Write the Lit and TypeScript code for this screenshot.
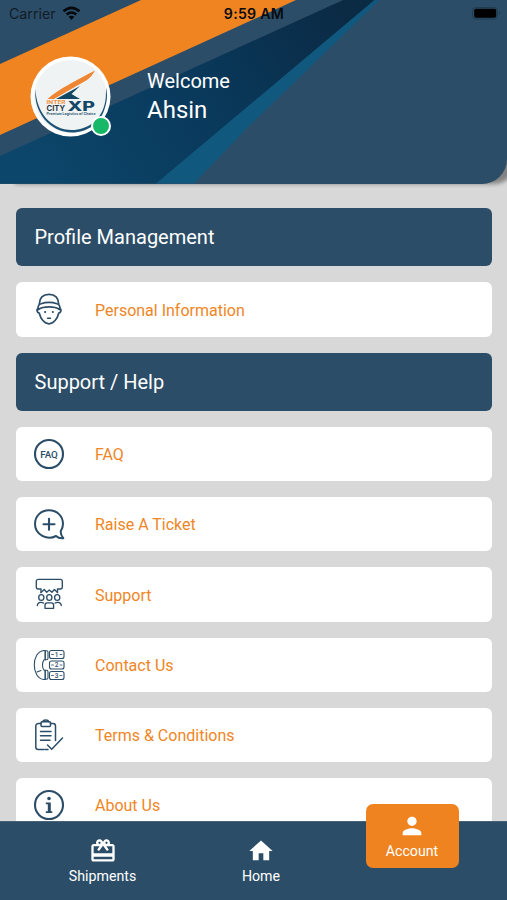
import { LitElement, html, css, svg, TemplateResult } from "lit";
import { customElement, property } from "lit/decorators.js";

const icons: Record<string, TemplateResult> = {
  person: svg`<g stroke-width="1.700">
    <path d="M6.300 11C6.500 5 10 1.300 16 1.300S25.500 5 25.700 11"/>
    <path d="M5.500 16.500c-1.200-3 .2-5 2.500-5.700 5-1.700 11-1.700 16 0 2.300.7 3.700 2.700 2.500 5.700-5-3.400-16-3.400-21 0z"/>
    <path d="M5.500 15.500c-2.300.5-1.800 4.300.8 4.700 1.200 5.500 5.200 10.600 9.700 10.600s8.500-5.100 9.700-10.600c2.600-.4 3.100-4.200.8-4.700"/>
    <path d="M14.500 25.200h3" stroke-width="1.500"/><path d="M12 19h.3M19.700 19h.3" stroke-width="1.800"/></g>`,
  faq: svg`<circle cx="16" cy="16" r="14" stroke-width="2.100"/><text class="faq" x="16" y="19.500">FAQ</text>`,
  ticket: svg`<path d="M23 28C14.500 32.600 2 27 2 16 2 8 8 2.200 16 2.200S30 8 30 16c0 3-1 5.200-2.300 7.200-.1 2.600.8 5 2.600 7-3 .3-5.400-.4-7.300-2.200z" stroke-width="2"/><path d="M16 10.800v11M10.500 16.300h11" stroke-width="2.100"/>`,
  support: svg`<g stroke-width="1.350"><path d="M8 14.500V11H5.300a2 2 0 0 1-2-2V3.300a2 2 0 0 1 2-2h22a2 2 0 0 1 2 2V9a2 2 0 0 1-2 2H24.500v3.500"/>
    <path d="M8 14.500l3.200-3 2.500 2.800 2.600-2.300 2.600 2.300 2.500-2.800 3.100 3"/>
    <ellipse cx="8.300" cy="19.500" rx="2.600" ry="2.900"/><ellipse cx="16.300" cy="19.500" rx="2.600" ry="2.900"/><ellipse cx="24.200" cy="19.500" rx="2.600" ry="2.900"/>
    <path d="M4.300 27.500c.2-2.200 1.500-3.200 3.500-3.200 1.200 0 2 .2 2.700.7M28.300 27.500c-.2-2.200-1.500-3.200-3.500-3.200-1.200 0-2 .2-2.700.7M12 30.300v-3q0-2.500 2.300-2.500h4q2.300 0 2.300 2.500v3z"/></g>`,
  contact: svg`<g stroke-width="1.100"><path d="M11 1.500C4.500 2 1.300 9 1.300 16S4.500 30 11 30.500"/><path d="M11 1.500h1.200v9.300H11c-2 2.200-2 8.200 0 10.400h1.200v9.300H11"/><path d="M12.200 1.800h1.300q1.500 0 1.500 1.500v6q0 1.500-1.500 1.500h-1.300zM12.200 21.200h1.300q1.500 0 1.500 1.500v6q0 1.500-1.500 1.500h-1.300zM4 23l4-1.500"/>
    <rect x="16.500" y="1.500" width="14.500" height="8" rx="2"/><rect x="16.500" y="12" width="14.500" height="8" rx="2"/><rect x="16.500" y="22.500" width="14.500" height="8" rx="2"/></g><path d="M18.500 5.500h2M27 5.500h2M18.500 16h2M27 16h2M18.500 26.500h2M27 26.500h2" stroke-width=".8"/>
    <text class="digit" x="23.700" y="7.900">1</text><text class="digit" x="23.700" y="18.400">2</text><text class="digit" x="23.700" y="28.900">3</text>`,
  terms: svg`<g stroke-width="1.500"><path d="M8 4.500H5.300A2.500 2.500 0 0 0 2.800 7v21a2.500 2.500 0 0 0 2.500 2.500H11M17.500 4.500H20A2.500 2.500 0 0 1 22.500 7v14.500"/><rect x="8" y="2.700" width="9.500" height="4.800" rx="1"/><path d="M10 2.700c.2-2.300 5.300-2.300 5.500 0M7.500 12.400H18M7.500 16.800H18M7.500 21.200H17M12 30.500h3M14.500 26l4.200 4.200L29.500 19"/></g>`,
  about: svg`<circle cx="16" cy="16" r="14" stroke-width="2.100"/><g class="solid"><circle cx="16" cy="9.500" r="1.800"/><path d="M12.800 13.500h5v8.800h1.500V24h-6.500v-1.700h2v-7h-2z"/></g>`,
  shipments: svg`<path class="solid" d="M20 6h-2.180c.11-.31.180-.65.180-1 0-1.660-1.340-3-3-3-1.050 0-1.960.54-2.500 1.350l-.5.670-.5-.68C10.960 2.540 10.050 2 9 2 7.340 2 6 3.340 6 5c0 .35.070.69.180 1H4c-1.110 0-1.990.89-1.990 2L2 19c0 1.110.89 2 2 2h16c1.110 0 2-.89 2-2V8c0-1.110-.89-2-2-2zm-5-2c.55 0 1 .45 1 1s-.45 1-1 1-1-.45-1-1 .45-1 1-1zM9 4c.55 0 1 .45 1 1s-.45 1-1 1-1-.45-1-1 .45-1 1-1zm11 15H4v-2h16v2zm0-5H4V8h5.080L7 10.830 8.620 12 11 8.760l1-1.360 1 1.360L15.380 12 17 10.830 14.920 8H20v6z"/>`,
  home: svg`<path class="solid" d="M10 20v-6h4v6h5v-8h3L12 3 2 12h3v8z"/>`,
  account: svg`<path class="solid" d="M12 12c2.210 0 4-1.790 4-4s-1.790-4-4-4-4 1.790-4 4 1.790 4 4 4zm0 2c-2.670 0-8 1.340-8 4v2h16v-2c0-2.660-5.330-4-8-4z"/>`,
};

@customElement("line-icon")
class LineIcon extends LitElement {
  @property() name = "";
  @property({ type: Number }) box = 32;
  static styles = css`
    :host { display: block; width: 32px; height: 32px; flex: none; }
    svg { display: block; width: 100%; height: 100%; fill: none; stroke: currentColor; stroke-linecap: round; stroke-linejoin: round; }
    .solid { fill: currentColor; stroke: none; }
    text { fill: currentColor; stroke: none; text-anchor: middle; font-family: Roboto, sans-serif; font-weight: 500; }
    .faq { font-size: 9.800px; }
    .digit { font-size: 6.500px; }
  `;
  render() {
    return html`<svg viewBox="0 0 ${this.box} ${this.box}">${icons[this.name]}</svg>`;
  }
}

@customElement("app-root")
class AppRoot extends LitElement {
  static styles = css`
    :host { display: flex; flex-direction: column; height: 900px; overflow: hidden; position: relative; background: #d8d8d8; font-family: Roboto, sans-serif; color: #fff; }
    * { box-sizing: border-box; }
    .header { height: 183.500px; flex: none; position: relative; border-radius: 0 0 25px 0; background: #2b4d67; box-shadow: 12px 3px 4px -3px #0006; }
    .art { position: absolute; inset: 0; width: 100%; height: 100%; border-radius: inherit; }
    .status { position: relative; height: 28px; padding: 0 6px 0 9px; display: grid; grid-template-columns: 1fr auto 1fr; align-items: center; color: #080b10; font: 14.200px/28px Inter, sans-serif; }
    .carrier { display: flex; align-items: center; gap: 6px; color: #111c27; }
    .wifi { width: 19px; height: 14px; margin-top: -2px; }
    .clock { font-weight: 600; font-size: 14.200px; letter-spacing: .25px; margin-left: -2px; }
    .battery { justify-self: end; width: 30px; height: 14px; margin-top: -2px; }
    .user { position: relative; display: flex; padding: 28px 0 0 30px; }
    .avatar { width: 81px; height: 81px; position: relative; }
    .avatar svg { display: block; width: 100%; height: 100%; }
    .online { position: absolute; left: 60.500px; top: 59.500px; width: 20px; height: 20px; border: 2px solid #fff; border-radius: 50%; background: #17b867; }
    .greeting { padding: 11px 0 0 36px; }
    .welcome { font-size: 20px; line-height: 28px; }
    .name { font-size: 24px; line-height: 30px; }
    .list { padding: 24.500px 15.500px 0; display: flex; flex-direction: column; gap: 16px; flex: 1; min-height: 0; overflow: hidden; }
    .section { flex: none; height: 58.300px; border-radius: 6px; background: #2b4d67; display: flex; align-items: center; padding: 0 19px; font-size: 20px; }
    .item { flex: none; height: 54.250px; border-radius: 6px; background: #fff; display: flex; align-items: center; gap: 30px; padding-left: 17.500px; color: #ee8625; font-size: 16px; }
    .item span { padding-top: 1.500px; }
    .item line-icon { color: #2b4d67; }
    .nav { height: 79px; flex: none; background: #2b4d67; display: grid; grid-template-columns: 181px 136px 1fr; align-items: start; padding: 0 0 0 12px; font-size: 14.200px; border-top: 1px solid #476379; }
    .tab { display: flex; flex-direction: column; align-items: center; padding-top: 15px; gap: 1px; line-height: 20px; }
    .tab line-icon { width: 28px; height: 28px; }
    .account { position: absolute; left: 365.500px; top: 804px; width: 93px; height: 63.500px; padding-top: 8px; border-radius: 7px; background: #ef8320; }
  `;
  items(list: [string, string][]) {
    return list.map(([icon, label]) => html`<div class="item"><line-icon name=${icon}></line-icon><span>${label}</span></div>`);
  }
  tab(icon: string, label: string, extra = "") {
    return html`<div class="tab ${extra}"><line-icon name=${icon} box="24"></line-icon><span>${label}</span></div>`;
  }
  render() {
    return html`
      <header class="header">
        <svg class="art" viewBox="0 0 507 183.500" preserveAspectRatio="none">
          <defs><linearGradient id="deep" gradientUnits="userSpaceOnUse" x1="50" y1="190" x2="340" y2="0"><stop stop-color="#0c466a"/><stop offset=".55" stop-color="#09385a"/><stop offset="1" stop-color="#0b2a44"/></linearGradient></defs>
          <path fill="#f08420" d="M0 64 141 0H296L0 135z"/>
          <path fill="url(#deep)" d="M0 156 343 0h32L157 183.500H0z"/>
          <path fill="#11587e" d="M374.500 0h5L247 128 194 183.500H156z"/>
        </svg>
        <div class="status">
          <div class="carrier"><span>Carrier</span>
            <svg class="wifi" viewBox="0 0 19 14" fill="none" stroke="#05080c" stroke-width="2.600"><path d="M1.500 5.300q8-7 16 0M4.600 8.600q4.900-4.200 9.800 0"/><path fill="#05080c" stroke="none" d="M6.600 10.800q2.900-2.200 5.800 0L9.500 13.900z"/></svg>
          </div>
          <span class="clock">9:59 AM</span>
          <svg class="battery" viewBox="0 0 30 14"><rect x="1.500" y="1.500" width="25" height="11.500" rx="3" fill="none" stroke="#203c51"/><rect x="3.200" y="2.800" width="22" height="9" rx="1.800"/><path d="M28 5.500q2.500 1.800 0 3.600z" fill="#203c51"/></svg>
        </div>
        <div class="user">
          <div class="avatar">
            <svg viewBox="0 0 81 81">
              <circle cx="40.500" cy="40.500" r="40" fill="#fff"/><circle cx="40.500" cy="40.500" r="36.500" fill="#f0f3f4"/>
              <path d="M5.500 33C3 56 20 76.500 42 76.500c16 0 29-10 33-25 3-9 2-15 1-20 0 7 0 13-2 19-4 14-17 23.500-32 23.500C21 74 6 56 5.500 33z" fill="#1c5275"/>
              <path d="M65 14.500C45 25 29 33 17.500 43H24L57 24C61 21 63 18 65 14.500z" fill="#ef8633"/><path d="M50 30 26 43H50l-8.500-5z" fill="#124766"/>
              <g font-family="Inter, sans-serif" font-weight="700"><text x="16.500" y="47.500" font-size="5" textLength="19" lengthAdjust="spacingAndGlyphs" fill="#ef9140">INTER</text><text x="16.500" y="55" font-size="7.200" textLength="18.500" lengthAdjust="spacingAndGlyphs" fill="#28343e">CITY</text><text x="37.500" y="55" font-size="13" font-weight="800" textLength="27.500" lengthAdjust="spacingAndGlyphs" fill="#124766">XP</text><text x="16.500" y="59.300" font-size="3.200" textLength="49" lengthAdjust="spacingAndGlyphs" fill="#315b77">Premium Logistics of Choice</text></g>
            </svg>
            <span class="online"></span>
          </div>
          <div class="greeting"><div class="welcome">Welcome</div><div class="name">Ahsin</div></div>
        </div>
      </header>
      <main class="list">
        <div class="section">Profile Management</div>
        ${this.items([["person", "Personal Information"]])}
        <div class="section">Support / Help</div>
        ${this.items([["faq", "FAQ"], ["ticket", "Raise A Ticket"], ["support", "Support"], ["contact", "Contact Us"], ["terms", "Terms & Conditions"], ["about", "About Us"]])}
      </main>
      <nav class="nav">${this.tab("shipments", "Shipments")}${this.tab("home", "Home")}${this.tab("account", "Account", "account")}</nav>
    `;
  }
}
